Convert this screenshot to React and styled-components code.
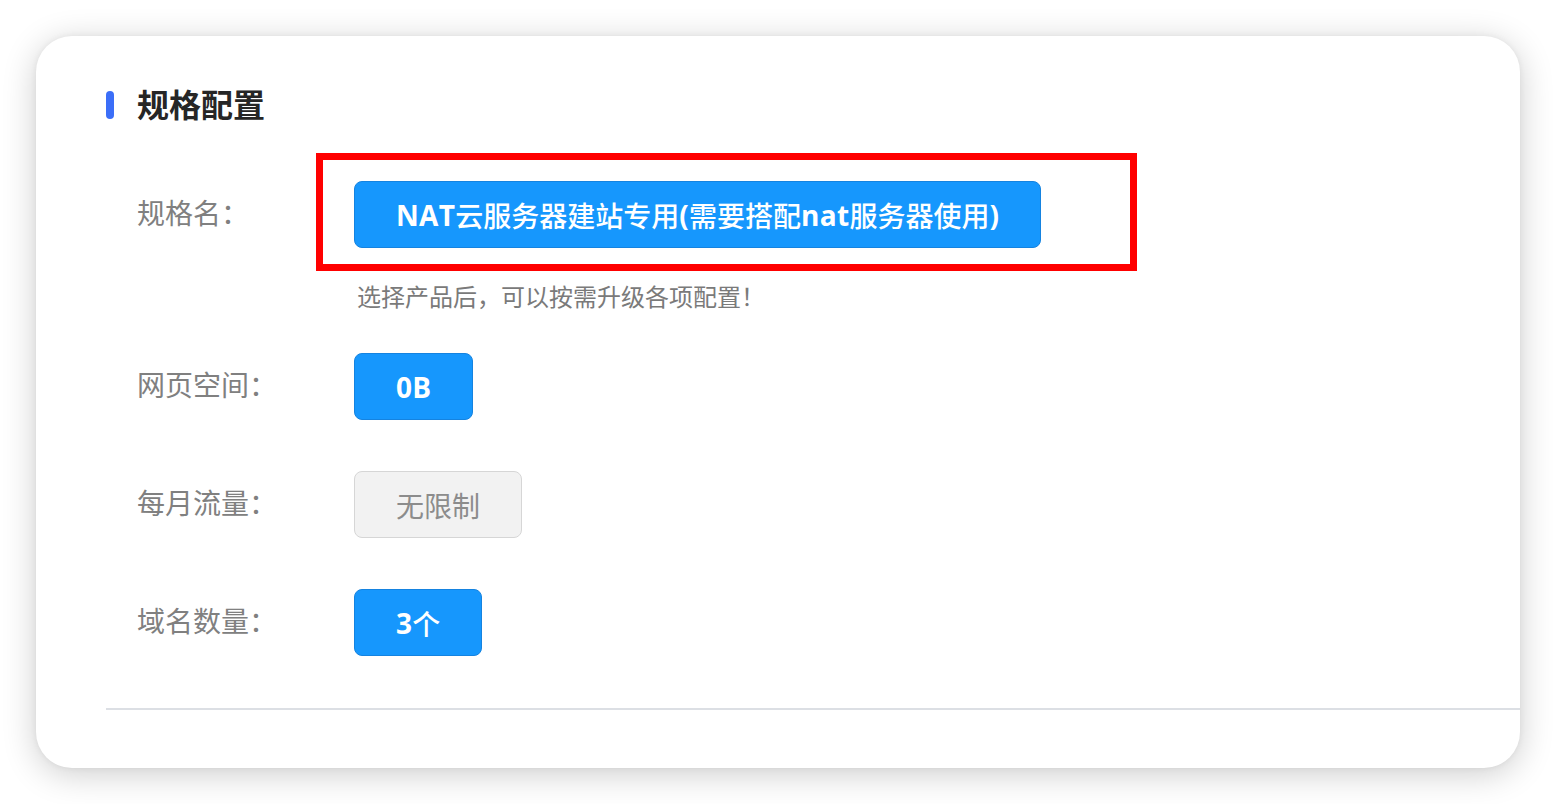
import React from "react";
import styled, { createGlobalStyle } from "styled-components";

const GlobalStyle = createGlobalStyle`
  html, body { margin: 0; padding: 0; background: #ffffff; }
  body { font-family: "Noto Sans CJK SC", "Noto Sans", sans-serif; }
  * { box-sizing: border-box; }
`;

const Page = styled.div`
  width: 1556px;
  height: 804px;
  padding: 36px;
  background: #ffffff;
`;

const Card = styled.div`
  width: 1484px;
  height: 732px;
  background: #ffffff;
  border-radius: 36px;
  box-shadow: 0 6px 34px rgba(0, 0, 0, 0.2), 0 0 6px rgba(0, 0, 0, 0.06);
  padding: 49px 0 0 70px;
  display: flex;
  flex-direction: column;
`;

const SectionHeader = styled.div`
  display: flex;
  align-items: center;
  gap: 23px;
  height: 36px;
`;

const Accent = styled.span`
  width: 8px;
  height: 28px;
  margin-top: 3px;
  border-radius: 4px;
  background: #3b6ef8;
`;

const Title = styled.h2`
  margin: 0;
  font-size: 32px;
  line-height: 36px;
  font-weight: 700;
  color: #262626;
`;

const Form = styled.div`
  display: flex;
  flex-direction: column;
  padding-left: 31px;
  margin-top: 60px;
`;

const Row = styled.div`
  display: flex;
  align-items: flex-start;
  margin-top: ${(p) => p.$mt || 0}px;
`;

const Label = styled.div`
  width: 217px;
  flex: none;
  font-size: 28px;
  line-height: 28px;
  margin-top: 17px;
  color: #808080;
`;

const Control = styled.div`
  position: relative;
  display: flex;
  flex-direction: column;
  align-items: flex-start;
`;

const Chip = styled.div`
  height: 67px;
  padding: 0 41px;
  display: inline-flex;
  align-items: center;
  justify-content: center;
  border-radius: 8px;
  font-size: 28px;
  white-space: nowrap;
  border: 1px solid ${(p) => (p.$disabled ? "#d6d6d6" : "#1583e0")};
  background: ${(p) => (p.$disabled ? "#f2f2f2" : "#1697fd")};
  color: ${(p) => (p.$disabled ? "#8c8c8c" : "#ffffff")};
  font-weight: ${(p) => (p.$disabled ? 400 : 500)};
`;

const Latin = styled.span`
  font-family: "Open Sans", "Noto Sans", sans-serif;
  font-weight: 700;
  letter-spacing: 0.3px;
`;

const Highlight = styled.div`
  position: absolute;
  left: -38px;
  top: -28px;
  width: 821px;
  height: 118px;
  border: 7px solid #ff0000;
  pointer-events: none;
`;

const Hint = styled.div`
  margin-top: 37px;
  padding-left: 3px;
  font-size: 24px;
  line-height: 22px;
  color: #7a7a7a;
  white-space: nowrap;
`;

const Divider = styled.div`
  margin-top: 52px;
  height: 2px;
  background: #dcdfe4;
`;

function Mixed({ text }) {
  const parts = text.split(/([A-Za-z0-9()]+)/).filter(Boolean);
  return parts.map((p, i) =>
    /^[A-Za-z0-9()]+$/.test(p) ? <Latin key={i}>{p}</Latin> : <span key={i}>{p}</span>
  );
}

const rows = [
  { label: "网页空间：", value: "0B", mt: 46 },
  { label: "每月流量：", value: "无限制", disabled: true, mt: 51 },
  { label: "域名数量：", value: "3个", mt: 51 },
];

export default function App() {
  return (
    <>
      <GlobalStyle />
      <Page>
        <Card>
          <SectionHeader>
            <Accent />
            <Title>规格配置</Title>
          </SectionHeader>
          <Form>
            <Row>
              <Label>规格名：</Label>
              <Control>
                <Highlight />
                <Chip>
                  <Mixed text="NAT云服务器建站专用(需要搭配nat服务器使用)" />
                </Chip>
                <Hint>选择产品后，可以按需升级各项配置！</Hint>
              </Control>
            </Row>
            {rows.map((r) => (
              <Row key={r.label} $mt={r.mt}>
                <Label>{r.label}</Label>
                <Control>
                  <Chip $disabled={r.disabled}>
                    {r.disabled ? r.value : <Mixed text={r.value} />}
                  </Chip>
                </Control>
              </Row>
            ))}
          </Form>
          <Divider />
        </Card>
      </Page>
    </>
  );
}
